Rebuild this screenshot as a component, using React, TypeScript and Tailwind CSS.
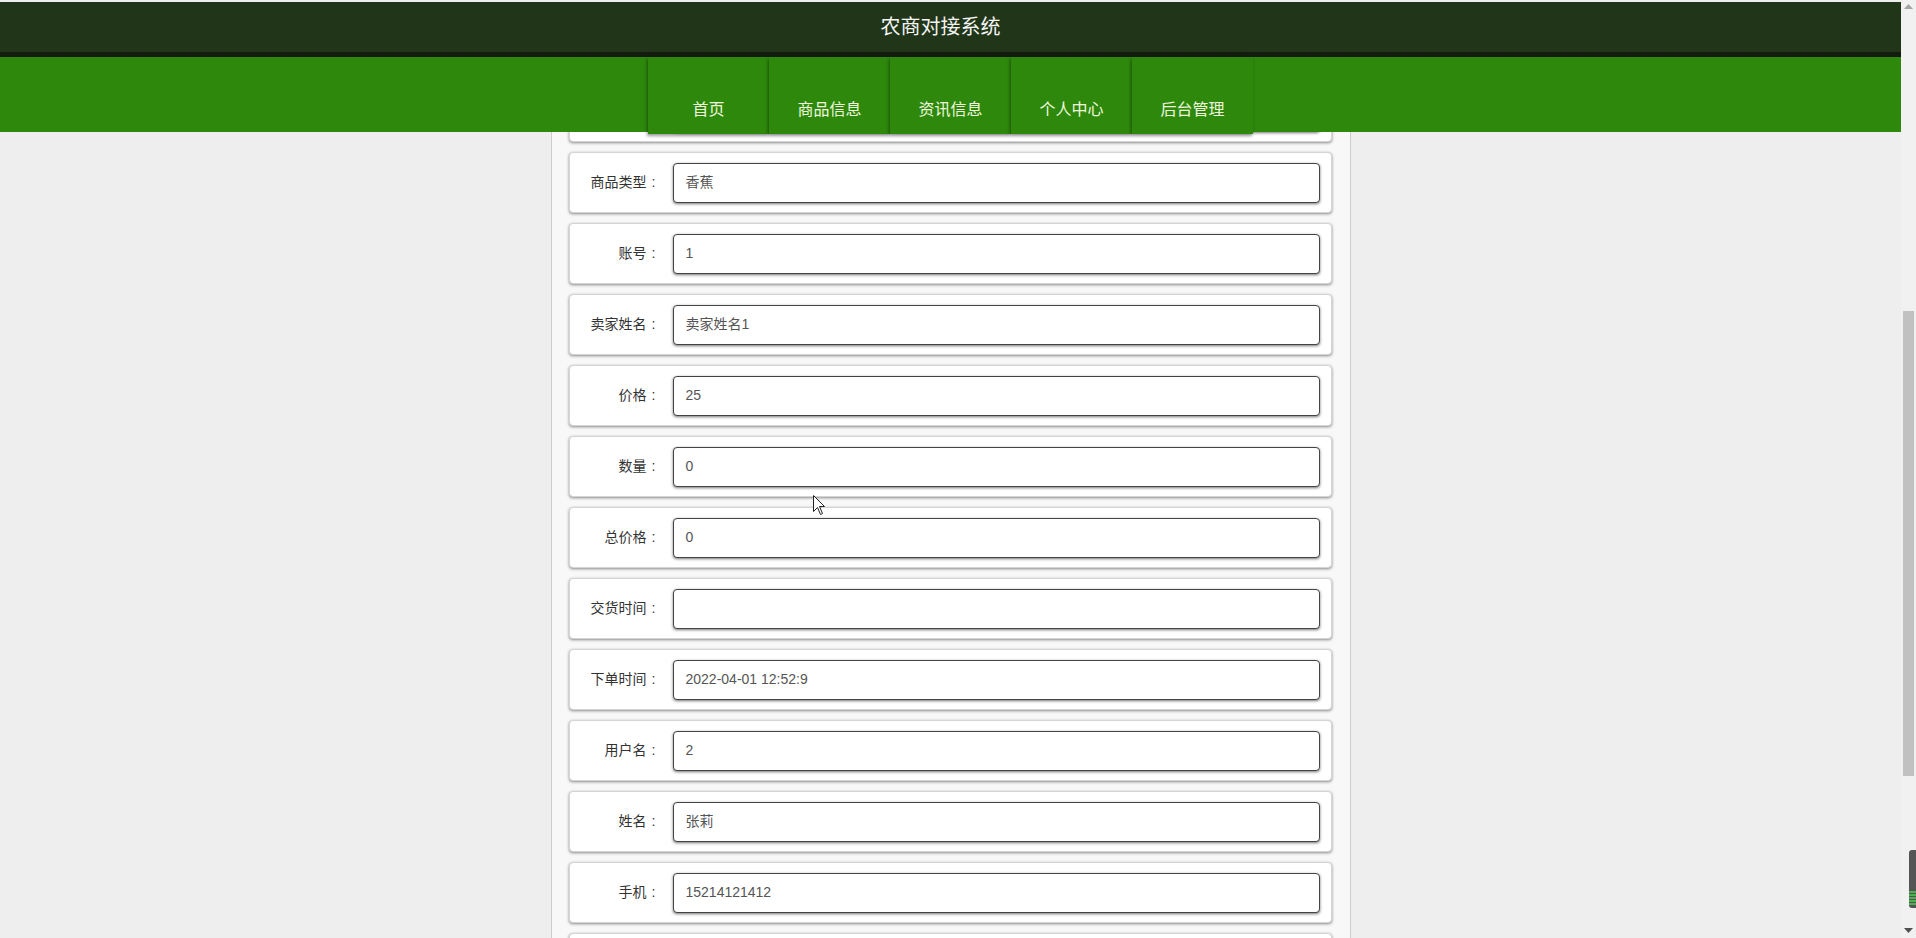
import React from 'react';

const navItems = ['首页', '商品信息', '资讯信息', '个人中心', '后台管理'];

// first and last rows are only partly on screen, so they carry no text
const fields: [string, string][] = [
  ['', ''],
  ['商品类型', '香蕉'],
  ['账号', '1'],
  ['卖家姓名', '卖家姓名1'],
  ['价格', '25'],
  ['数量', '0'],
  ['总价格', '0'],
  ['交货时间', ''],
  ['下单时间', '2022-04-01 12:52:9'],
  ['用户名', '2'],
  ['姓名', '张莉'],
  ['手机', '15214121412'],
  ['', ''],
];

function FieldRow({ label, value }: { label: string; value: string }) {
  return (
    <div className="flex h-[61px] shrink-0 items-center rounded-[4px] border border-[#d4d4d4] bg-white pl-[10px] pr-[11px] shadow-[0_1px_3px_rgba(0,0,0,0.45)]">
      <div className="w-[93px] shrink-0 pr-[12px] text-right text-[14px] text-[#333]">
        {label && (
          <>
            {label}
            <span className="inline-block w-[14px] text-center">:</span>
          </>
        )}
      </div>
      <div className="flex h-[40px] flex-1 items-center rounded-[4px] border border-[#444] bg-white pl-[12px] text-[14px] text-[#555] shadow-[0_1px_3px_rgba(0,0,0,0.55)]">
        {value}
      </div>
    </div>
  );
}

export default function App() {
  return (
    <div className="flex h-[938px] w-full overflow-hidden bg-[#eeeeee] font-['Liberation_Sans','Noto_Sans_CJK_SC',sans-serif]">
      <div className="relative flex min-w-0 flex-1 flex-col">
        <div className="h-[2px] shrink-0" />
        <div className="flex h-[50px] shrink-0 items-center justify-center bg-[#213619] pr-[20px] text-[20px] text-[#f4f4f4]">
          农商对接系统
        </div>
        <div className="h-[5px] shrink-0 bg-[#131c0f]" />
        <div className="relative z-10 flex h-[75px] shrink-0 items-start justify-center bg-[#2e880c]">
          {navItems.map((item) => (
            <div
              key={item}
              className="flex h-[77px] w-[121px] items-end justify-center bg-[#2e880c] pb-[12px] text-[16px] text-[#eef8dc] shadow-[-1px_2px_3px_rgba(0,0,0,0.4)]"
            >
              {item}
            </div>
          ))}
        </div>
        <div className="flex min-h-0 flex-1 justify-center overflow-hidden">
          <div className="w-[800px] border-x border-[#cccccc] bg-[#f8f8f8] pl-[17px] pr-[18px]">
            <div className="mt-[-51px] flex flex-col gap-[10px]">
              {fields.map(([label, value], i) => (
                <FieldRow key={i} label={label} value={value} />
              ))}
            </div>
          </div>
        </div>
        <svg className="absolute left-[813px] top-[495px] z-20" width="13" height="21" viewBox="0 0 13 21">
          <path d="M0.5 0.5 L0.5 16.5 L4.5 12.5 L7.5 19.5 L9.5 18.5 L6.5 11.5 L11.5 11.5 Z" fill="#fff" stroke="#222" strokeWidth="1" />
        </svg>
      </div>
      <div className="relative flex w-[15px] shrink-0 flex-col items-center bg-[#f1f1f1]">
        <svg className="mt-[4px]" width="9" height="5" viewBox="0 0 9 5">
          <path d="M0 5 L4.5 0 L9 5 Z" fill="#a3a3a3" />
        </svg>
        <div className="mt-[302px] h-[465px] w-[11px] bg-[#c1c1c1]" />
        <div className="flex-1" />
        <svg className="mb-[5px]" width="9" height="5" viewBox="0 0 9 5">
          <path d="M0 0 L9 0 L4.5 5 Z" fill="#505050" />
        </svg>
        <div className="absolute left-[8px] top-[850px] flex h-[58px] w-[7px] flex-col justify-end rounded-l-[3px] bg-[#555] pb-[3px]">
          <div className="h-[2px] bg-[#4caf50]" />
          <div className="mt-[1px] h-[2px] bg-[#4caf50]" />
          <div className="mt-[1px] h-[2px] bg-[#4caf50]" />
          <div className="mt-[1px] h-[2px] bg-[#4caf50]" />
          <div className="mt-[1px] h-[2px] bg-[#4caf50]" />
        </div>
      </div>
    </div>
  );
}
